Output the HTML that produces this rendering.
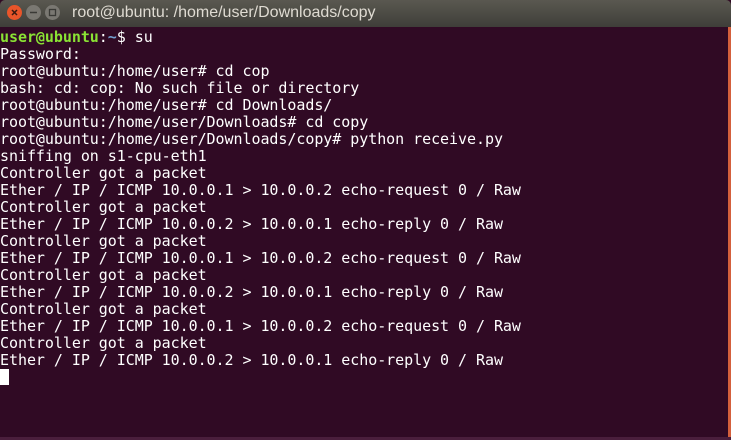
<!DOCTYPE html>
<html><head><meta charset="utf-8"><style>
html,body{margin:0;padding:0;width:731px;height:440px;overflow:hidden;background:#300a24;}
.title{position:absolute;left:0;top:0;width:731px;height:27px;background:linear-gradient(#5a5850,#3f3e39);border-radius:5px 5px 0 0;}
.btn{position:absolute;top:5px;width:15px;height:15px;border-radius:50%;}
.t{position:absolute;left:72px;top:4px;font:16px "Liberation Sans",sans-serif;color:#dfdbd2;}
pre{position:absolute;left:0;top:29px;margin:0;font:15px/17px "DejaVu Sans Mono",monospace;letter-spacing:-0.05px;color:#fff;}
.g{color:#8ae234;font-weight:bold}.b{color:#729fcf;font-weight:bold}
.cur{display:inline-block;width:9px;height:16px;background:#fff;vertical-align:top;}
.edge{position:absolute;right:0;top:27px;width:3px;height:413px;background:#d4603c;}
.bot{position:absolute;left:0;top:437px;width:731px;height:3px;background:#4a1e3c;}
</style></head><body>
<div class="title">
<div class="btn" style="left:7px;background:#e9552a;"><svg width="15" height="15"><path d="M5 5L10 10M10 5L5 10" stroke="#3a1a10" stroke-width="1.5"/></svg></div>
<div class="btn" style="left:26px;background:#7a7872;"><svg width="15" height="15"><path d="M4 7.5H11" stroke="#3a3a36" stroke-width="1.5"/></svg></div>
<div class="btn" style="left:45px;background:#7a7872;"><svg width="15" height="15"><rect x="4.5" y="4.5" width="6" height="6" fill="none" stroke="#3a3a36" stroke-width="1.3"/></svg></div>
<div class="t">root@ubuntu: /home/user/Downloads/copy</div>
</div>
<pre><span class="g">user@ubuntu</span>:<span class="b">~</span>$ su
Password:
root@ubuntu:/home/user# cd cop
bash: cd: cop: No such file or directory
root@ubuntu:/home/user# cd Downloads/
root@ubuntu:/home/user/Downloads# cd copy
root@ubuntu:/home/user/Downloads/copy# python receive.py
sniffing on s1-cpu-eth1
Controller got a packet
Ether / IP / ICMP 10.0.0.1 &gt; 10.0.0.2 echo-request 0 / Raw
Controller got a packet
Ether / IP / ICMP 10.0.0.2 &gt; 10.0.0.1 echo-reply 0 / Raw
Controller got a packet
Ether / IP / ICMP 10.0.0.1 &gt; 10.0.0.2 echo-request 0 / Raw
Controller got a packet
Ether / IP / ICMP 10.0.0.2 &gt; 10.0.0.1 echo-reply 0 / Raw
Controller got a packet
Ether / IP / ICMP 10.0.0.1 &gt; 10.0.0.2 echo-request 0 / Raw
Controller got a packet
Ether / IP / ICMP 10.0.0.2 &gt; 10.0.0.1 echo-reply 0 / Raw
<span class="cur"></span></pre>
<div class="edge"></div>
<div class="bot"></div>
</body></html>
